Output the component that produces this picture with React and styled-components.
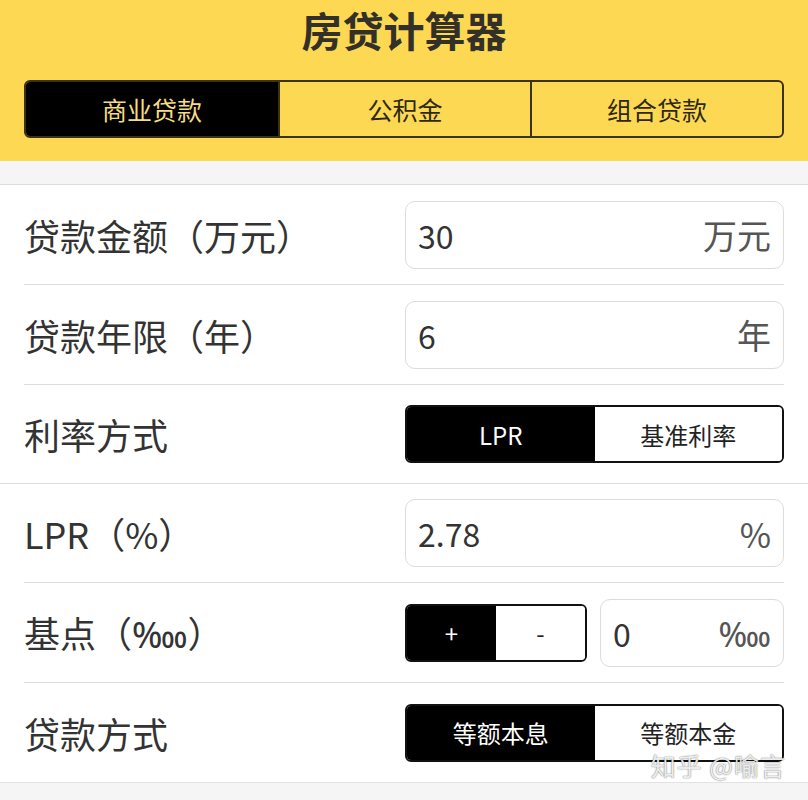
import React, { useState } from 'react'
import styled, { createGlobalStyle } from 'styled-components'

const Global = createGlobalStyle`
  body {
    margin: 0;
    background: #f5f5f5;
    font-family: "Noto Sans CJK SC", "Noto Sans", sans-serif;
    color: #333;
  }
`

const Page = styled.div`
  position: relative;
  width: 808px;
  height: 800px;
  overflow: hidden;
  background: #f5f5f5;
`

const Header = styled.header`
  background: #fdd853;
  padding: 4px 24px 23px;
  display: flex;
  flex-direction: column;
  align-items: stretch;
  gap: 26px;
`

const Title = styled.h1`
  margin: 0;
  text-align: center;
  font-size: 41px;
  line-height: 50px;
  font-weight: 700;
  color: #33302a;
`

const Tabs = styled.div`
  display: grid;
  grid-template-columns: repeat(3, 1fr);
  height: 58px;
  border: 2px solid #3b3115;
  border-radius: 6px;
  overflow: hidden;
  box-sizing: border-box;
`

const Tab = styled.button`
  border: none;
  border-left: ${p => (p.$first ? 'none' : '2px solid #3b3115')};
  background: ${p => (p.$active ? '#000' : 'transparent')};
  color: ${p => (p.$active ? '#f6dc85' : '#2d2816')};
  font-family: inherit;
  font-size: 25px;
  padding: 0;
  cursor: pointer;
`

const Gap = styled.div`
  height: 23px;
  border-bottom: 1px solid #ddd;
`

const Form = styled.div`
  background: #fff;
  border-bottom: 1px solid #e2e2e2;
`

const Row = styled.div`
  height: ${p => p.$h || 99.5}px;
  box-sizing: border-box;
  margin: ${p => (p.$wide ? '0' : '0 24px')};
  padding: ${p => (p.$wide ? '0 24px' : '0')};
  display: flex;
  align-items: center;
  justify-content: space-between;
  border-bottom: ${p => (p.$last ? 'none' : '1px solid #ddd')};
`

const Label = styled.div`
  font-size: 36px;
  color: #333;
`

const Field = styled.div`
  width: ${p => p.$w || 379}px;
  height: 68px;
  box-sizing: border-box;
  border: 1px solid #dcdcdc;
  border-radius: 10px;
  display: flex;
  align-items: center;
  justify-content: space-between;
  padding: 0 12px;
`

const Value = styled.span`
  font-size: 32px;
  color: #333;
`

const Unit = styled.span`
  font-size: 34px;
  color: #555;
`

const Controls = styled.div`
  display: flex;
  align-items: center;
  gap: 13px;
`

const Segment = styled.div`
  width: ${p => p.$w || 379}px;
  height: 58px;
  box-sizing: border-box;
  border: 2px solid #111;
  border-radius: 6px;
  overflow: hidden;
  display: grid;
  grid-template-columns: 1fr 1fr;
`

const SegButton = styled.button`
  border: none;
  padding: 0;
  background: ${p => (p.$active ? '#000' : '#fff')};
  color: ${p => (p.$active ? '#fff' : '#222')};
  font-family: inherit;
  font-size: 24px;
  cursor: pointer;
`

const Watermark = styled.div`
  position: absolute;
  right: 22px;
  top: 747px;
  font-size: 25px;
  color: rgba(255, 255, 255, 0.9);
  text-shadow: 0 0 1px rgba(0, 0, 0, 0.5), 0 0 2px rgba(0, 0, 0, 0.3);
  letter-spacing: 1px;
  pointer-events: none;
`

function Switch({ options, width, value, onChange }) {
  return (
    <Segment $w={width}>
      {options.map(o => (
        <SegButton key={o} $active={o === value} onClick={() => onChange(o)}>
          {o}
        </SegButton>
      ))}
    </Segment>
  )
}

export default function App() {
  const [loan, setLoan] = useState('商业贷款')
  const [rateType, setRateType] = useState('LPR')
  const [sign, setSign] = useState('+')
  const [method, setMethod] = useState('等额本息')

  return (
    <Page>
      <Global />
      <Header>
        <Title>房贷计算器</Title>
        <Tabs>
          {['商业贷款', '公积金', '组合贷款'].map((t, i) => (
            <Tab key={t} $first={i === 0} $active={t === loan} onClick={() => setLoan(t)}>
              {t}
            </Tab>
          ))}
        </Tabs>
      </Header>
      <Gap />
      <Form>
        <Row $h={100}>
          <Label>贷款金额（万元）</Label>
          <Field>
            <Value>30</Value>
            <Unit>万元</Unit>
          </Field>
        </Row>
        <Row $h={100}>
          <Label>贷款年限（年）</Label>
          <Field>
            <Value>6</Value>
            <Unit>年</Unit>
          </Field>
        </Row>
        <Row $wide $h={99}>
          <Label>利率方式</Label>
          <Switch options={['LPR', '基准利率']} value={rateType} onChange={setRateType} />
        </Row>
        <Row $h={99}>
          <Label>LPR（%）</Label>
          <Field>
            <Value>2.78</Value>
            <Unit>%</Unit>
          </Field>
        </Row>
        <Row $h={100}>
          <Label>基点（‱）</Label>
          <Controls>
            <Switch options={['+', '-']} width={182} value={sign} onChange={setSign} />
            <Field $w={184}>
              <Value>0</Value>
              <Unit>‱</Unit>
            </Field>
          </Controls>
        </Row>
        <Row $last $h={99}>
          <Label>贷款方式</Label>
          <Switch options={['等额本息', '等额本金']} value={method} onChange={setMethod} />
        </Row>
      </Form>
      <Watermark>知乎 @喻言</Watermark>
    </Page>
  )
}
